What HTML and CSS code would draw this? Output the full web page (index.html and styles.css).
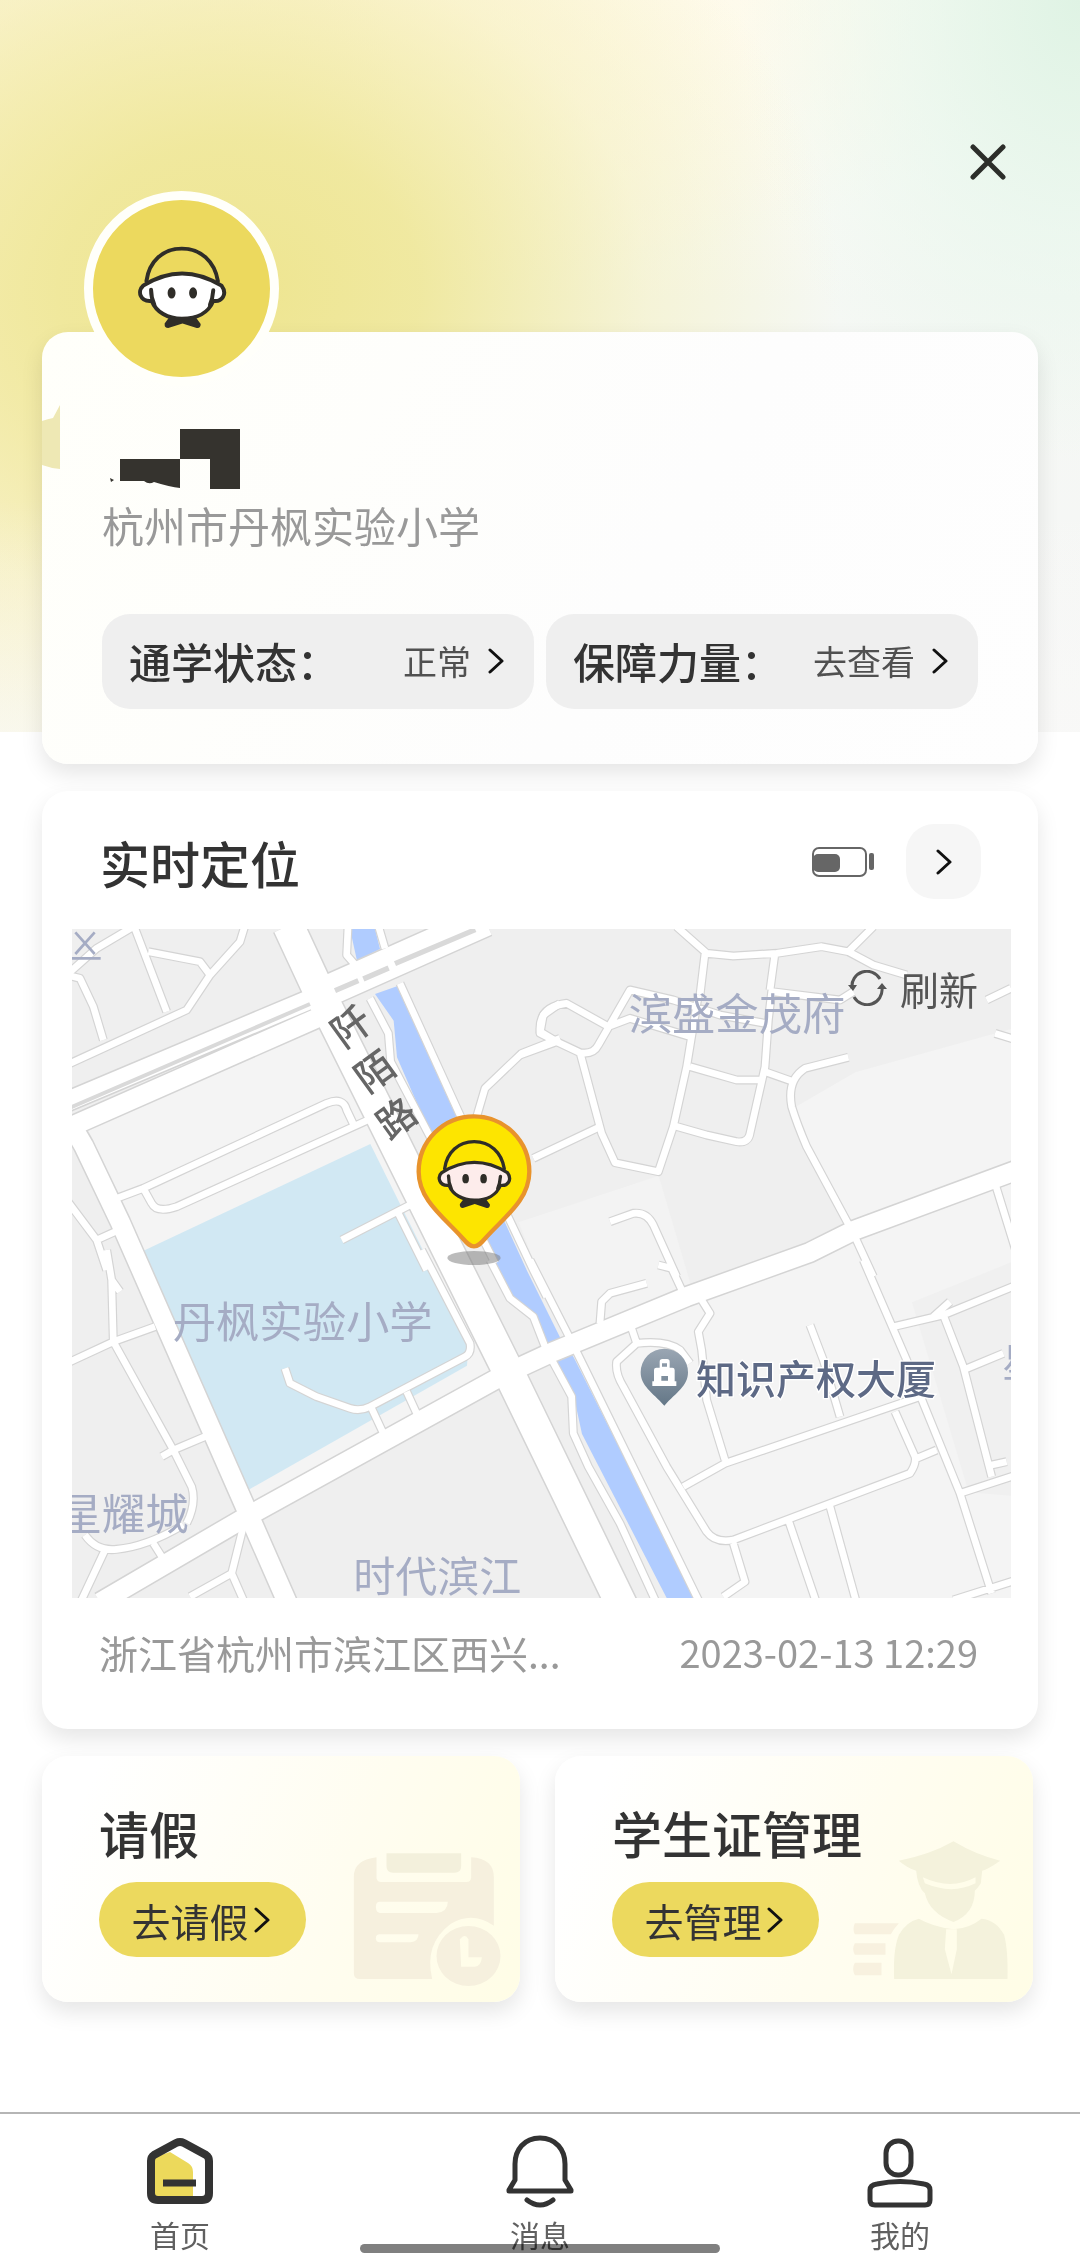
FILE: index.html
```html
<!DOCTYPE html>
<html lang="zh-CN">
<head>
<meta charset="utf-8">
<meta name="viewport" content="width=device-width, initial-scale=1">
<title>首页</title>
<link rel="stylesheet" href="styles.css">
</head>
<body>
<svg class="sprite" aria-hidden="true">
  <symbol id="chevron" viewBox="0 0 16 26"><path d="M2 2l12 11L2 24" fill="none" stroke="currentColor" stroke-width="3" stroke-linecap="round" stroke-linejoin="round"/></symbol>
  <symbol id="boy" viewBox="230 220 275 260">
    <path class="face" d="M250 346Q367 272 487 346C506 372 488 396 462 392C448 428 412 446 367 446C324 446 290 426 276 392C240 396 232 362 250 346Z"/>
    <g fill="none" stroke="#2f2d28" stroke-width="12" stroke-linecap="round" stroke-linejoin="round">
      <path d="M260 332C268 272 310 234 367 234C424 234 466 272 476 332"/>
      <path d="M250 346Q367 272 487 346C506 372 488 396 462 392C448 428 412 446 367 446C324 446 290 426 276 392C240 396 232 362 250 346Z"/>
      <path d="M274 358Q274 382 284 404M462 360Q460 386 452 404"/>
    </g>
    <path fill="#2f2d28" d="M324 350a12 17 0 1 0 24 0a12 17 0 1 0-24 0zM389 350a12 17 0 1 0 24 0a12 17 0 1 0-24 0z" transform="translate(0 18)"/>
    <path fill="#2f2d28" d="M330 440Q367 458 408 440L424 462Q424 476 412 474L369 460L326 474Q314 474 315 460Z"/>
  </symbol>
</svg>

<main class="page">
  <header class="topbar">
    <button class="close" type="button" aria-label="关闭"><svg viewBox="0 0 36 36"><path d="M3 3l30 30M33 3L3 33" fill="none" stroke="#2c2e2a" stroke-width="5" stroke-linecap="round"/></svg></button>
  </header>

  <section class="card profile">
    <div class="avatar"><svg><use href="#boy"/></svg></div>
    <svg class="edge" viewBox="0 0 18 64" aria-hidden="true"><path d="M18 0V64Q8 63 0 60V16Q6 14 11 13Z" fill="#eee8b4"/></svg>
    <svg class="masked-name" viewBox="0 0 132 60" aria-hidden="true"><path fill="#35332e" d="M71 0h60v60h-30V30H71zM11 30h60v29q-10-1-26-6q-5 3-10-1H11zM1 49l4 2l-3 2z"/></svg>
    <p class="school">杭州市丹枫实验小学</p>
    <div class="chips">
      <button class="chip" type="button"><strong>通学状态：</strong><span>正常</span><svg class="chev"><use href="#chevron"/></svg></button>
      <button class="chip" type="button"><strong>保障力量：</strong><span>去查看</span><svg class="chev"><use href="#chevron"/></svg></button>
    </div>
  </section>

  <section class="card location">
    <div class="location-head">
      <h2>实时定位</h2>
      <svg class="battery" viewBox="0 0 64 32" aria-label="电量"><rect x="2" y="2" width="53" height="28" rx="6" fill="none" stroke="#666" stroke-width="2"/><rect x="2" y="8" width="27" height="18" rx="5" fill="#666"/><rect x="58" y="7" width="5" height="17" rx="2" fill="#666"/></svg>
      <button class="more" type="button" aria-label="查看定位"><svg class="chev"><use href="#chevron"/></svg></button>
    </div>
    <div class="map">
      <svg class="map-canvas" viewBox="0 0 2817 2007" role="img" aria-label="地图">
        <defs>
          <g id="minor">
            <g transform="translate(-36 -27)">
              <path d="M20 435L380 270L450 165L540 65L560 0M215 0L320 275M265 95L420 125L450 165M20 165L110 85L220 20M20 165L60 175L100 260L130 360"/>
              <path d="M865 0L860 105L890 140M950 0L975 85M1020 190L1200 585L1420 1050L1460 1130M930 235L985 340L992 425L1110 650L1270 960L1305 1030"/>
              <path d="M170 835L250 805L800 550Q850 530 860 570L880 612M250 805L275 850Q290 880 350 860L935 595"/>
              <path d="M20 840L110 960L140 1050M110 960L165 935"/>
              <path d="M1250 590L1275 505L1385 400L1500 355M1500 250L1450 285L1440 340L1480 360M1420 715L1620 620"/>
              <path d="M845 960L1060 850M1010 870L1100 1050"/>
            </g>
            <g transform="translate(1344 -27)">
              <path d="M470 20L560 100L640 108L770 100L905 80L985 95L1060 135L1160 165M985 95L1060 20M555 100L540 225M765 100L750 210M0 405L110 365L180 398Q220 405 235 375L330 210L460 240L600 285L735 310M110 365L60 335Q55 260 140 250L265 320M265 320L330 295L510 350M535 225L500 440L460 620L415 755L285 728L245 640L180 398M510 440L650 480L720 480M465 618L560 645L650 665Q685 670 690 640L735 440L745 300L755 215L960 240L1000 215M735 455L820 485M1400 240L1473 205M1425 340L1490 360M985 412L855 445Q800 480 815 560Q830 610 860 680L1000 940L1060 1070"/>
              <path d="M270 905L340 880Q380 875 400 915L470 1070M1425 790L1490 1000"/>
            </g>
            <g transform="translate(-36 993)">
              <path d="M140 -30L155 60L180 95M155 60L160 245L340 570L395 680Q410 730 380 790M20 310L160 245L285 200M305 590L340 570L435 530M75 825Q110 875 170 868Q260 860 370 795M280 850L315 905M135 870L60 1030M550 800L515 940L550 1020M515 940L390 1010"/>
              <path d="M1085 -30L1230 250Q1235 280 1215 290L930 440Q900 455 870 445L770 410L690 370L675 325M935 445L970 520M1040 395L1070 460"/>
              <path d="M1290 0L1350 115L1420 170L1455 260"/>
            </g>
            <g transform="translate(1344 993)">
              <path d="M30 0L155 245L540 1030M85 280L155 410L160 520L205 620L300 790L410 1030M240 190L245 125L270 100L380 70M415 15L455 25L490 100M335 205L350 250M350 250L290 305Q285 340 310 380L440 620L560 815Q585 850 640 840L1170 640Q1190 610 1185 590L1125 455M350 250Q440 240 480 270L510 310M545 120L570 160L535 215L545 270L560 420L615 600M490 680L615 610L1200 410M870 195L910 300L960 470M1030 0L1160 300L1210 430L1320 700L1415 1000M1120 200L1270 165L1490 75M1240 170L1290 125M1270 165L1330 320L1415 650M1330 330L1450 280M1320 700L1490 645M1190 595L1250 570M1415 615L1460 605M640 850L675 965L610 1010M805 780L890 1030M930 740L1010 1030M1300 1020L1490 960"/>
            </g>
          </g>
          <g id="medium">
            <path d="M84 2020L524 1763L1304 1333L1440 1270L1844 1103L2214 970L2344 905L2830 725"/>
            <path d="M0 590L35 650L145 880L524 1743L650 2030"/>
            <path d="M-20 520L740 200M-20 600L740 265"/>
          </g>
          <g id="major">
            <path d="M649 -10L734 173L1309 1328L1650 2030"/>
            <path d="M734 200L1240 -25"/>
          </g>
          <linearGradient id="poi" x2="0" y2="1"><stop stop-color="#9aa6b3"/><stop offset="1" stop-color="#647787"/></linearGradient>
        </defs>
        <rect width="2817" height="2007" fill="#efefef"/>
        <path d="M44 590L744 280L1290 1320L550 1720L200 960ZM2350 430L2817 300V720L2344 900L2160 540Z" fill="#f4f4f4"/>
        <path d="M1500 1250L2344 920L2817 740V2007H1880Z" fill="#f4f4f4"/>
        <path d="M1340 880L1760 740L1860 1080L1480 1240Z" fill="#f3f3f3"/>
        <path d="M2520 1120L2817 1000V1700L2690 1690Z" fill="#f0f0f0"/>
        <path d="M205 970L895 645L1190 1240L1185 1310L525 1685Z" fill="#d1e8f3"/>
        <path d="M834 0H909L924 60L855 95ZM909 195L975 172L1145 545L1365 1025L1464 1225L1505 1285L1870 2007H1784L1530 1515L1510 1423L1430 1245L1385 1175L1315 1115L1275 1035L1075 615L975 385L965 275Z" fill="#b0ccff"/>
        <use href="#minor" class="casing minor"/><use href="#medium" class="casing medium"/><use href="#major" class="casing major"/>
        <use href="#minor" class="road minor"/><use href="#medium" class="road medium"/><use href="#major" class="road major"/>
        <path d="M-10 538L714 225" stroke="#d9d9d9" stroke-width="12" fill="none"/>
        <path d="M789 185L859 155M874 150L950 117M969 104L1210 2" stroke="#d9d9d9" stroke-width="16" fill="none"/>
        <g class="place">
          <text x="1670" y="302" font-size="130">滨盛金茂府</text>
          <text x="302" y="1228" font-size="130">丹枫实验小学</text>
          <text x="-40" y="1802" font-size="130">星耀城</text>
          <text x="844" y="1990" font-size="126">时代滨江</text>
          <text x="2790" y="1345" font-size="120">星</text>
          <path d="M10 10L68 75M68 10L10 75M0 88H86" stroke="#a5acc4" stroke-width="8" fill="none"/>
        </g>
        <g class="street" font-size="116">
          <text transform="translate(838 293) rotate(-36)" x="-58" y="42">阡</text>
          <text transform="translate(909 428) rotate(-36)" x="-58" y="42">陌</text>
          <text transform="translate(974 568) rotate(-36)" x="-58" y="42">路</text>
        </g>
        <path d="M1777 1430C1740 1390 1706 1370 1706 1330A71 71 0 0 1 1848 1330C1848 1370 1814 1390 1777 1430Z" fill="url(#poi)"/>
        <path d="M1763 1298q0-8 8-8h14q8 0 8 8v18h8q7 0 7 7v34h5v14h-72v-14h5v-34q0-7 7-7h10zM1770 1303h15v10h-15zM1768 1341v14h20v-14z" fill="#fff" fill-rule="evenodd"/>
        <text class="poi" x="1872" y="1396" font-size="120">知识产权大厦</text>
        <ellipse cx="1206" cy="987" rx="80" ry="21" fill="#777" fill-opacity=".5"/>
        <path d="M1206 952C1194 952 1186 944 1174 930C1120 868 1040 815 1040 728A166 166 0 0 1 1372 728C1372 815 1292 868 1238 930C1226 944 1218 952 1206 952Z" fill="#fde500" stroke="#e8932c" stroke-width="13"/>
        <use class="pin-boy" href="#boy" x="1093" y="626" width="228" height="216"/>
      </svg>
      <button class="refresh" type="button"><svg viewBox="0 0 40 36"><g fill="none" stroke="#555" stroke-width="3"><path d="M5 18A15 15 0 0 1 33 9M35 18A15 15 0 0 1 7 27"/></g><path d="M1 15h9l-4 6zM30 19l5-6l5 6z" fill="#555"/></svg>刷新</button>
    </div>
    <div class="location-foot"><span class="address">浙江省杭州市滨江区西兴...</span><time datetime="2023-02-13T12:29">2023-02-13 12:29</time></div>
  </section>

  <div class="actions">
    <section class="action">
      <h2>请假</h2>
      <button class="pill" type="button">去请假<svg class="chev"><use href="#chevron"/></svg></button>
      <svg class="art" viewBox="970 720 470 450" aria-hidden="true"><path fill="#f6f0de" d="M1040 772v60q0 14 14 14h256q14 0 14-14v-60q68 4 68 60v145q-65-45-130-5q-80 60-55 165H990q-18 0-18-18V830q0-50 68-58zM1050 905q-12 0-12 16t12 18h170q34-4 34-34zM1050 1003q-12 0-12 12t12 12h92q24-2 24-24z"/><path fill="#f3f0dc" d="M1070 760h224v38q0 20-20 20h-184q-20 0-20-20z"/><path fill="#f6f0de" fill-rule="evenodd" d="M1220 1068a96 90 0 1 0 192 0a96 90 0 1 0-192 0zM1290 1018q16-20 26 0v54h40q-2 30-24 28h-38z"/></svg>
    </section>
    <section class="action">
      <h2>学生证管理</h2>
      <button class="pill" type="button">去管理<svg class="chev"><use href="#chevron"/></svg></button>
      <svg class="art art-student" viewBox="968 720 470 450" aria-hidden="true"><path fill="#f4f2dc" d="M1108 782Q1200 765 1272 724Q1340 765 1412 782Q1375 808 1358 812L1354 850Q1342 868 1336 872Q1336 940 1272 966Q1200 940 1186 880Q1164 860 1160 812Q1135 805 1108 782ZM1168 956Q1130 965 1108 1005Q1090 1050 1094 1137H1434Q1436 1050 1424 1005Q1400 960 1356 956Q1320 985 1272 988Q1210 980 1168 956Z"/><path fill="#fffdea" d="M1180 832Q1265 872 1338 832V850Q1268 885 1186 850ZM1250 988h32v60l-16 75l-20-75z"/><path fill="#f8f1df" d="M976 970h132q-16 18-24 33H976q-8-16 0-33zM976 1030h92v34h-92q-10-17 0-34zM976 1088h80v38h-80q-10-19 0-38z"/></svg>
    </section>
  </div>
</main>

<nav class="tabbar">
  <a href="#home"><svg viewBox="0 0 72 76"><path d="M11 24L26 19L44 30Q49 33 49 39V67H11Z" fill="#ecd95b"/><path d="M36 9Q38 9 40 10L62 22Q65 24 65 28V60Q65 67 58 67H14Q7 67 7 60V28Q7 24 10 22L32 10Q34 9 36 9Z" fill="none" stroke="#333" stroke-width="8"/><path d="M19 50h33" stroke="#333" stroke-width="7"/></svg><span>首页</span></a>
  <a href="#messages"><svg viewBox="0 0 72 76"><path d="M36 5C20 5 11 17 11 31V47L5 57V58H67V57L61 47V31C61 17 52 5 36 5Z M23 67Q36 77 49 67" fill="none" stroke="#333" stroke-width="5" stroke-linecap="round" stroke-linejoin="round"/></svg><span>消息</span></a>
  <a href="#me"><svg viewBox="0 0 72 76"><rect x="22" y="8" width="25" height="34" rx="12" fill="none" stroke="#333" stroke-width="5"/><path d="M13 51Q36 46 60 51Q66 52 66 57V67Q66 72 61 72H11Q6 72 6 67V57Q6 52 13 51Z" fill="none" stroke="#333" stroke-width="5"/></svg><span>我的</span></a>
  <div class="home-indicator"></div>
</nav>
</body>
</html>
```
FILE: styles.css
```css
* { box-sizing: border-box; }

body {
  margin: 0;
  min-height: 100vh;
  display: flex;
  flex-direction: column;
  color: #333;
  font-family: "Noto Sans CJK SC", sans-serif;
  background:
    linear-gradient(to bottom, transparent 500px, rgba(250, 250, 248, .6) 732px, #fff 732px),
    radial-gradient(ellipse 600px 500px at 240px 290px, #eee590 0, rgba(239, 231, 152, .9) 30%, rgba(245, 238, 180, .45) 68%, transparent 100%),
    radial-gradient(ellipse 340px 460px at 100% 0, #dff3e4 0, rgba(231, 246, 236, .7) 50%, transparent 100%),
    radial-gradient(ellipse 420px 720px at 0 300px, #f8efbd 0, rgba(249, 243, 208, .8) 50%, transparent 100%),
    radial-gradient(ellipse 760px 300px at 300px 0, #fdf6dc 0, transparent 100%),
    linear-gradient(to bottom, #fffef8 0, #f5f8f4 300px, #f6f6f6 732px, #fff 732px);
}

button {
  border: 0;
  padding: 0;
  color: inherit;
  background: none;
  font: inherit;
  cursor: pointer;
}

svg { display: block; }
h2, p { margin: 0; }

h2 {
  font-size: 50px;
  line-height: 72px;
  font-weight: 500;
}

.sprite { position: absolute; width: 0; height: 0; }
.face { fill: var(--face, #fff); }
.chev { flex: none; width: 16px; height: 26px; color: #111; }

.page { flex: 1; padding: 0 42px; }

.topbar {
  height: 332px;
  padding: 140px 28px 0 0;
  display: flex;
  justify-content: flex-end;
  align-items: flex-start;
}

.close { padding: 4px; }
.close svg { width: 36px; height: 36px; }

.card {
  position: relative;
  border-radius: 26px;
  background: #fff;
  box-shadow: 0 10px 22px rgba(0, 0, 0, .1);
}

.profile {
  padding: 97px 60px 55px;
  background: linear-gradient(120deg, #fffffa, #fdfdfd 60%, #fefefe);
}

.avatar {
  position: absolute;
  left: 42px;
  top: -141px;
  width: 195px;
  height: 195px;
  border: 9px solid #fffffa;
  border-radius: 50%;
  background: #ecd95e;
  display: grid;
  place-items: center;
}

.avatar svg { width: 92px; height: 86px; margin-bottom: 4px; }
.edge { position: absolute; left: 0; top: 73px; width: 18px; height: 64px; }
.masked-name { width: 132px; height: 60px; margin-left: 7px; }

.school {
  margin-top: 6px;
  font-size: 42px;
  line-height: 60px;
  color: #999;
}

.chips { margin-top: 59px; display: grid; grid-template-columns: 1fr 1fr; gap: 12px; }

.chip {
  height: 95px;
  padding: 0 30px 2px 27px;
  display: flex;
  align-items: center;
  border-radius: 28px;
  background: #efefef;
}

.chip strong { flex: 1; text-align: left; font-size: 42px; font-weight: 500; white-space: nowrap; }
.chip span { margin-right: 17px; font-size: 34px; color: #505050; white-space: nowrap; }

.location { margin-top: 27px; padding: 33px 27px 45px 30px; }

.location-head { padding: 0 30px 30px 28px; display: flex; align-items: center; }
.location-head h2 { flex: 1; }
.battery { width: 64px; height: 32px; }

.more {
  width: 75px;
  height: 75px;
  margin-left: 31px;
  border-radius: 28px;
  background: #f6f6f6;
  display: grid;
  place-items: center;
}

.map { position: relative; }
.map-canvas { width: 100%; height: auto; overflow: hidden; }
.casing, .road { fill: none; stroke-linejoin: round; }
.casing { stroke: #d4d4d4; }
.road { stroke: #fff; }
.casing.minor { stroke-width: 27px; }
.road.minor { stroke-width: 20px; }
.casing.medium { stroke-width: 66px; }
.road.medium { stroke-width: 57px; }
.casing.major { stroke-width: 101px; }
.road.major { stroke-width: 92px; }
.place { fill: #a5acc4; }
.street { fill: #666; font-weight: 500; }
.poi { fill: #5d6985; font-weight: 500; stroke: #fff; stroke-width: 8px; paint-order: stroke; }
.pin-boy { --face: #fdeceb; }

.refresh {
  position: absolute;
  top: 30px;
  right: 33px;
  display: flex;
  align-items: center;
  gap: 13px;
  font-size: 39px;
  line-height: 58px;
  color: #555;
}

.refresh svg { width: 40px; height: 36px; }

.location-foot {
  padding: 25px 33px 3px 27px;
  display: flex;
  justify-content: space-between;
  font-size: 39px;
  line-height: 58px;
  color: #999;
  white-space: nowrap;
}

.location-foot time { font-size: 38px; }

.actions {
  margin-top: 27px;
  padding: 0 5px 40px 0;
  display: grid;
  grid-template-columns: 1fr 1fr;
  gap: 35px;
}

.action {
  position: relative;
  height: 246px;
  padding: 40px 57px;
  border-radius: 26px;
  background: linear-gradient(115deg, #fff 10%, #fffdf0 60%, #fffde6);
  box-shadow: 0 10px 22px rgba(0, 0, 0, .1);
}

.action h2 { position: relative; z-index: 1; white-space: nowrap; }

.pill {
  width: 207px;
  height: 75px;
  margin-top: 14px;
  padding-right: 4px;
  display: flex;
  align-items: center;
  justify-content: center;
  gap: 5px;
  border-radius: 38px;
  background: #ecd95e;
  font-size: 39px;
}

.art { position: absolute; right: 10px; bottom: 12px; width: 157px; height: 150px; }
.art-student { right: 24px; }

.tabbar {
  position: relative;
  height: 146px;
  padding-top: 19px;
  border-top: 2px solid #b5b5b5;
  background: #fff;
  display: grid;
  grid-template-columns: repeat(3, 1fr);
  align-items: start;
}

.tabbar a {
  display: flex;
  flex-direction: column;
  align-items: center;
  gap: 5px;
  color: #606060;
  text-decoration: none;
  font-size: 30px;
  line-height: 40px;
}

.tabbar svg { width: 72px; height: 76px; }

.home-indicator {
  position: absolute;
  left: 33.333%;
  right: 33.333%;
  bottom: 5px;
  height: 9px;
  border-radius: 5px;
  background: #808080;
  mix-blend-mode: multiply;
}
```
